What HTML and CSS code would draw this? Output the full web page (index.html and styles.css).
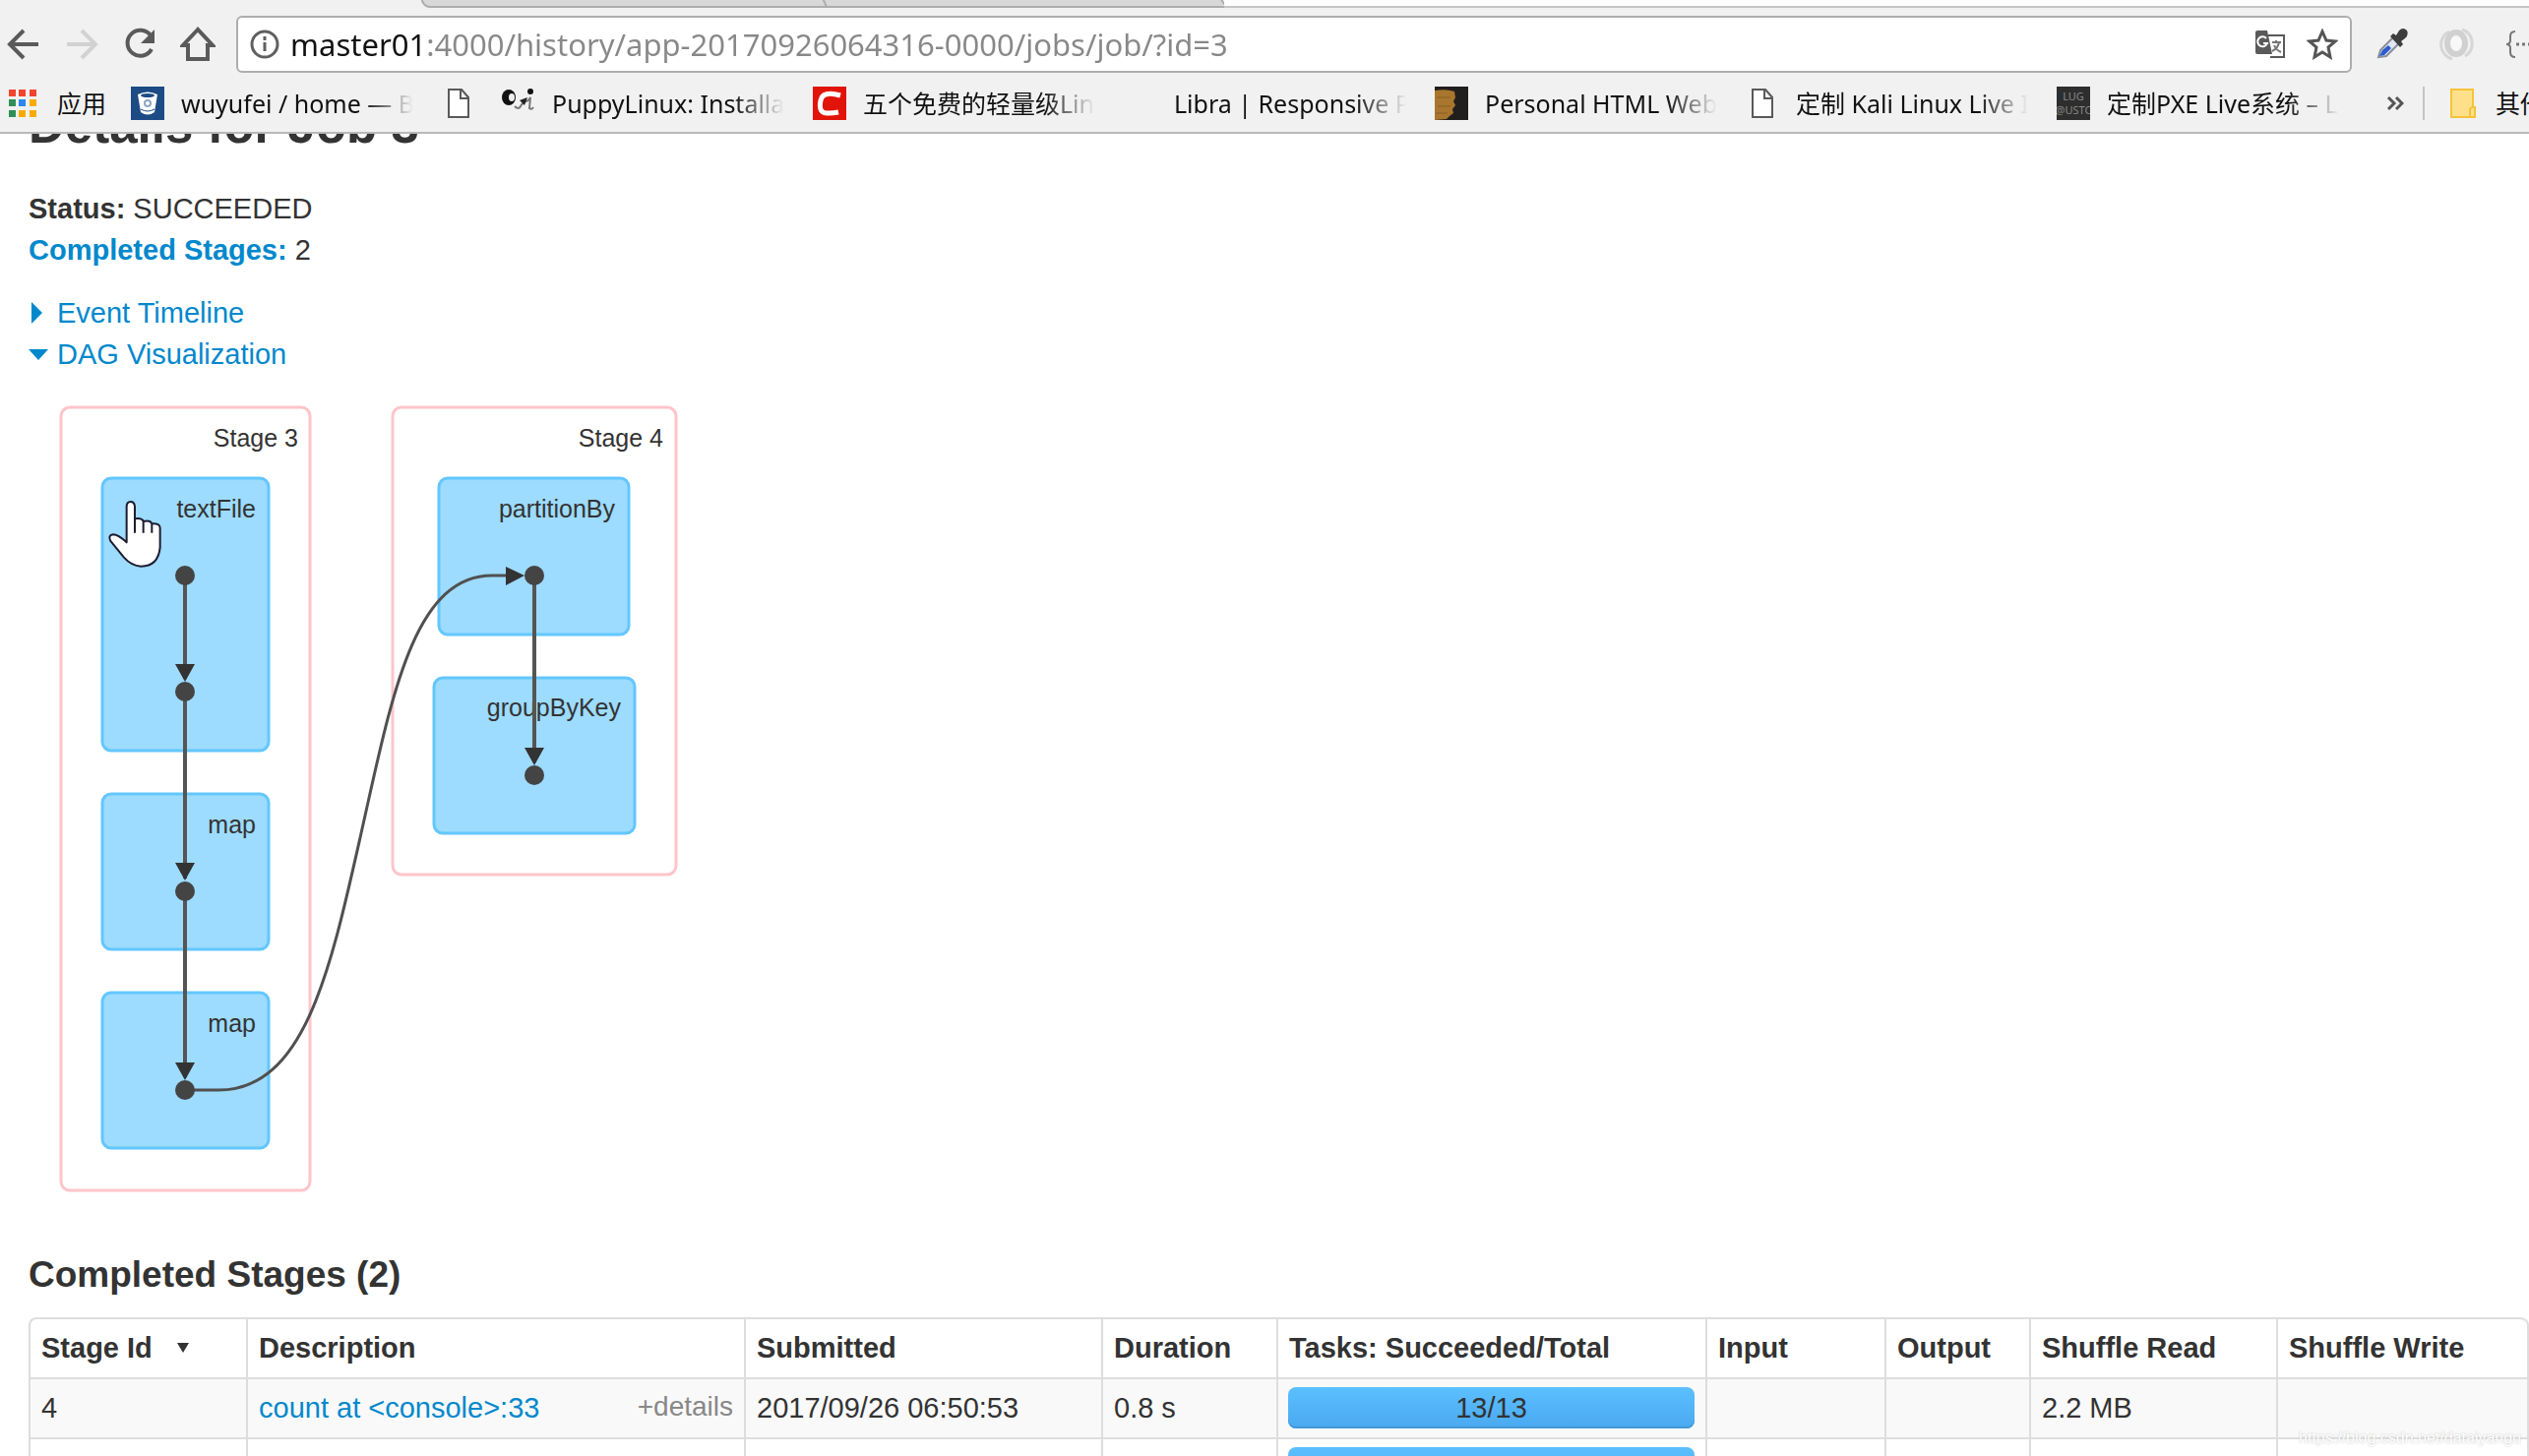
FILE: index.html
```html
<!DOCTYPE html>
<html lang="en">
<head>
<meta charset="utf-8">
<title>Details for Job 3</title>
<link rel="stylesheet" href="styles.css">
</head>
<body>
<header class="chrome">
  <div class="tabstrip">
    <div class="tab-active"></div>
    <svg class="tabs" viewBox="0 0 820 8" aria-hidden="true">
      <path d="M0 -2 Q2 6 8 7 H812 Q818 6 813 -2z" fill="#d8d8d8"/>
      <path d="M0 -2 Q2 6 8 7 H816 M408 -2 L412 7 M812 -2 L818 7" fill="none" stroke="#adadad" stroke-width="2"/>
    </svg>
    <div class="tab-rest"></div>
  </div>
  <div class="toolbar">
    <nav class="nav">
      <button class="tool" aria-label="Back"><svg width="34" height="34" viewBox="0 0 34 34"><path d="M32 17H4M17 3L3 17l14 14" fill="none" stroke="#5a5a5a" stroke-width="4"/></svg></button>
      <button class="tool" aria-label="Forward"><svg width="34" height="34" viewBox="0 0 34 34"><path d="M2 17h28M17 3l14 14-14 14" fill="none" stroke="#d2d2d2" stroke-width="4"/></svg></button>
      <button class="tool" aria-label="Reload"><svg width="34" height="34" viewBox="0 0 34 34"><path d="M28 8A13 13 0 1 0 29 22" fill="none" stroke="#5a5a5a" stroke-width="4"/><path d="M32 2v14H18z" fill="#5a5a5a"/></svg></button>
      <button class="tool" aria-label="Home"><svg width="36" height="36" viewBox="0 0 36 36"><path d="M18 3L3 19h5v14h20V19h5z" fill="none" stroke="#5a5a5a" stroke-width="4"/></svg></button>
    </nav>
    <div class="omnibox">
      <svg width="30" height="30" viewBox="0 0 30 30" aria-hidden="true"><circle cx="15" cy="15" r="13" fill="none" stroke="#5f5f5f" stroke-width="3"/><path d="M15 13v9M15 7v4" stroke="#5f5f5f" stroke-width="3"/></svg>
      <input class="url" type="text" aria-label="Address" value="master01:4000/history/app-20170926064316-0000/jobs/job/?id=3">
      <button class="inner" aria-label="Translate this page"><svg width="30" height="30" viewBox="0 0 30 30"><path d="M13 6h16v22H15" fill="#fff" stroke="#5a5a5a" stroke-width="2"/><path d="M2 1h10l5 24H2a2 2 0 0 1-2-2V3a2 2 0 0 1 2-2z" fill="#5a5a5a"/><path d="M11 9a5 5 0 1 0 1 5H8" fill="none" stroke="#fff" stroke-width="2"/><path d="M17 13h9M21 11v2M24 13q-1 6-7 9M19 16q2 5 7 7" fill="none" stroke="#777" stroke-width="2"/></svg></button>
      <button class="inner" aria-label="Bookmark this page"><svg width="32" height="32" viewBox="0 0 32 32"><path d="M16 3l4 9 9 1-7 6 2 10-8-5-8 5 2-10-7-6 9-1z" fill="none" stroke="#555" stroke-width="3"/></svg></button>
    </div>
    <div class="extensions">
      <button class="tool" aria-label="Colour picker"><svg width="34" height="34" viewBox="0 0 34 34"><path d="M4 30l2-7L20 9l6 6-14 14z" fill="#dfe6f5" stroke="#8a8f98" stroke-width="2"/><path d="M5 29l3-6 6-5 3 3-7 7z" fill="#2d5bd0"/><path d="M16 9l3-3 3 2 3-5q4-4 8 0 2 5-2 8l-4 3 2 3-3 3z" fill="#3d3d3d"/></svg></button>
      <button class="tool" aria-label="Extension"><svg width="36" height="36" viewBox="0 0 36 36"><path d="M14 33A15 15 0 0 1 11 5M24 3a15 15 0 0 1 3 27" fill="none" stroke="#d6d6d6" stroke-width="3"/><ellipse cx="18" cy="17" rx="9" ry="11" fill="#f8f8f8" stroke="#d0d0d0" stroke-width="6"/></svg></button>
      <button class="tool" aria-label="JSON viewer"><svg width="36" height="34" viewBox="0 0 36 34"><path d="M12 4q-5 0-5 5v4q0 4-4 4 4 0 4 4v4q0 5 5 5" fill="none" stroke="#777" stroke-width="2"/><path d="M13 17h3M19 17h3M25 17h3" stroke="#777" stroke-width="3"/></svg></button>
    </div>
  </div>
  <nav class="bookmarks">
    <a class="apps" href="#">
      <svg width="28" height="28" viewBox="0 0 28 28" aria-hidden="true"><path d="M0 0h7v7H0zM10 0h7v7h-7zM21 0h7v7h-7z" fill="#f4442e"/><path d="M0 10h7v7H0zM0 21h7v7H0z" fill="#2f8f56"/><path d="M10 10h7v7h-7z" fill="#2b87f0"/><path d="M21 10h7v7h-7zM10 21h7v7h-7zM21 21h7v7h-7z" fill="#fbab00"/></svg>
      <span>应用</span>
    </a>
    <a class="bookmark" href="#"><svg class="fav" viewBox="0 0 34 34" aria-hidden="true"><path d="M0 0h34v34H0z" fill="#1c4b85"/><path d="M7 8q10-5 20 0l-3 18q-7 5-14 0z" fill="#fff"/><ellipse cx="17" cy="9" rx="7" ry="2" fill="#1c4b85"/><circle cx="17" cy="17" r="4" fill="#8da6c3"/><circle cx="17" cy="17" r="2" fill="#fff"/><path d="M10 23q7 4 14 0" stroke="#1c4b85" stroke-width="1" fill="none"/></svg><span class="label">wuyufei / home — Bitbucket</span></a>
    <a class="bookmark bookmark-bare" href="#" aria-label="Untitled bookmark"><svg class="fav" viewBox="0 0 34 34" aria-hidden="true"><path d="M7 3h13l7 8v20H7zM19 3v9h8" fill="#fff" stroke="#5a5a5a" stroke-width="2"/></svg></a>
    <a class="bookmark" href="#"><svg class="fav" viewBox="0 0 34 34" aria-hidden="true"><ellipse cx="7" cy="11" rx="7" ry="8" fill="#111"/><ellipse cx="10" cy="11" rx="3" ry="4" fill="#eee"/><path d="M13 20q4 4 6 0t8-6l2-3-1 11q2 2 4-1" fill="none" stroke="#777" stroke-width="2"/><path d="M18 14l8-3-3 8z" fill="#222"/><circle cx="29" cy="5" r="3" fill="#111"/></svg><span class="label">PuppyLinux: Installation</span></a>
    <a class="bookmark" href="#"><svg class="fav" viewBox="0 0 34 34" aria-hidden="true"><path d="M0 0h34v34H0z" fill="#e1140a"/><path d="M28 9q-18-5-20 5-3 14 8 13 5 0 10-1" fill="none" stroke="#fff" stroke-width="5"/></svg><span class="label">五个免费的轻量级Linux</span></a>
    <a class="bookmark" href="#"><span class="fav"></span><span class="label">Libra | Responsive Portfolio</span></a>
    <a class="bookmark" href="#"><svg class="fav" viewBox="0 0 34 34" aria-hidden="true"><path d="M0 0h34v34H0z" fill="#211e1e"/><path d="M0 4q12-2 20 1l1 6-2 4 2 4-3 4 1 4-4 3-3 3-12 1z" fill="#a8762d"/><path d="M2 11h14M3 20h13M1 27h12" stroke="#8a5f22" stroke-width="1"/></svg><span class="label">Personal HTML Website</span></a>
    <a class="bookmark" href="#"><svg class="fav" viewBox="0 0 34 34" aria-hidden="true"><path d="M7 3h13l7 8v20H7zM19 3v9h8" fill="#fff" stroke="#5a5a5a" stroke-width="2"/></svg><span class="label">定制 Kali Linux Live ISO</span></a>
    <a class="bookmark" href="#"><svg class="fav fav-text" viewBox="0 0 34 34" aria-hidden="true"><path d="M0 0h34v34H0z" fill="#2e2e2e"/><text x="17" y="14">LUG</text><text x="17" y="28">@USTC</text></svg><span class="label">定制PXE Live系统 – LUG</span></a>
    <button class="more" aria-label="More bookmarks"><svg width="18" height="16" viewBox="0 0 18 16"><path d="M2 2l6 6-6 6M10 2l6 6-6 6" fill="none" stroke="#555" stroke-width="3"/></svg></button>
    <a class="others" href="#"><svg width="26" height="30" viewBox="0 0 26 30" aria-hidden="true"><path d="M1 1h22v18h2v10H1z" fill="#ffe08a" stroke="#f5c33b" stroke-width="2"/><path d="M20 28v-7q2-3 4-2" fill="none" stroke="#f5c33b" stroke-width="2"/></svg><span>其他书签</span></a>
  </nav>
</header>

<main class="viewport">
  <div class="page">
    <h1>Details for Job 3</h1>
    <ul class="summary">
      <li><strong>Status:</strong> SUCCEEDED</li>
      <li><a href="#completed"><strong>Completed Stages:</strong></a> 2</li>
    </ul>
    <a class="toggle" href="#timeline"><svg width="20" height="22" viewBox="0 0 20 22" aria-hidden="true"><path d="M3 0l11 11L3 22z"/></svg>Event Timeline</a>
    <a class="toggle" href="#dag"><svg width="20" height="22" viewBox="0 0 20 22" aria-hidden="true"><path d="M0 6h20L10 17z"/></svg>DAG Visualization</a>

    <svg class="dag" id="dag" width="700" height="870" viewBox="29 381 700 870" role="img" aria-label="DAG of stages 3 and 4">
      <g class="stage">
        <rect x="62" y="414" width="253" height="796" rx="9"/>
        <rect x="399" y="414" width="288" height="475" rx="9"/>
      </g>
      <g class="op">
        <rect x="104" y="486" width="169" height="277" rx="9"/>
        <rect x="104" y="807" width="169" height="158" rx="9"/>
        <rect x="104" y="1009" width="169" height="158" rx="9"/>
        <rect x="446" y="486" width="193" height="159" rx="9"/>
        <rect x="441" y="689" width="204" height="158" rx="9"/>
      </g>
      <g class="caption">
        <text x="303" y="454">Stage 3</text>
        <text x="260" y="526">textFile</text>
        <text x="260" y="847">map</text>
        <text x="260" y="1049">map</text>
        <text x="674" y="454">Stage 4</text>
        <text x="625" y="526">partitionBy</text>
        <text x="631" y="728">groupByKey</text>
      </g>
      <g class="edge">
        <path class="thick" d="M188 585V690M188 703V893M188 906V1095M543 585V775"/>
        <path d="M188 1108H222C310 1108 336 985 367 847C398 709 420 585 500 585H520"/>
      </g>
      <path class="arrow" d="M178 675h20l-10 18zM178 877h20l-10 18zM178 1080h20l-10 18zM533 760h20l-10 18zM514 576v19l19-10z"/>
      <g class="dot">
        <circle cx="188" cy="585" r="10"/>
        <circle cx="188" cy="703" r="10"/>
        <circle cx="188" cy="906" r="10"/>
        <circle cx="188" cy="1108" r="10"/>
        <circle cx="543" cy="585" r="10"/>
        <circle cx="543" cy="788" r="10"/>
      </g>
      <path class="pointer" transform="translate(40 390) scale(.3333)" d="M266 484V375Q266 360 278 360T291 375V412Q312 408 318 420Q338 415 343 427Q368 425 368 440V500Q362 557 310 557Q280 555 258 530L217 480Q208 462 225 460Q240 460 266 484zM291 412V455M317 420V455M343 427V455"/>
    </svg>

    <h2 id="completed">Completed Stages (2)</h2>
    <table class="stages">
      <colgroup><col class="c-id"><col class="c-desc"><col class="c-sub"><col class="c-dur"><col class="c-tasks"><col class="c-in"><col class="c-out"><col class="c-read"><col></colgroup>
      <thead>
        <tr><th>Stage Id<svg class="sort" width="12" height="10" viewBox="0 0 12 10" aria-hidden="true"><path d="M0 0h12L6 10z"/></svg></th><th>Description</th><th>Submitted</th><th>Duration</th><th>Tasks: Succeeded/Total</th><th>Input</th><th>Output</th><th>Shuffle Read</th><th>Shuffle Write</th></tr>
      </thead>
      <tbody>
        <tr><td>4</td><td><div class="desc"><a href="#">count at &lt;console&gt;:33</a><span class="details">+details</span></div></td><td>2017/09/26 06:50:53</td><td>0.8 s</td><td class="bar-cell"><div class="bar">13/13</div></td><td></td><td></td><td>2.2 MB</td><td></td></tr>
        <tr><td>3</td><td><div class="desc"><a href="#">map at &lt;console&gt;:29</a><span class="details">+details</span></div></td><td>2017/09/26 06:50:52</td><td>0.9 s</td><td class="bar-cell"><div class="bar">13/13</div></td><td></td><td></td><td></td><td>2.2 MB</td></tr>
      </tbody>
    </table>
  </div>
</main>
<div class="watermark">https://blog.csdn.net/dataiyangu</div>
</body>
</html>
```
FILE: styles.css
```css
* { box-sizing: border-box; }

body {
  margin: 0;
  height: 100vh;
  display: flex;
  flex-direction: column;
  overflow: hidden;
  position: relative;
  background: #fff;
  color: #333;
  font: 29px/42px "Liberation Sans", Arial, sans-serif;
}

a { color: #0088cc; text-decoration: none; }

button {
  border: 0;
  padding: 0;
  background: none;
  display: flex;
  align-items: center;
  justify-content: center;
}

svg { flex: none; }

/* Browser chrome */
.chrome {
  flex: none;
  background: #f1f1f1;
  border-bottom: 2px solid #b9b9b9;
  font: 25px/36px "Noto Sans", "Noto Sans CJK SC", sans-serif;
}

.tabstrip { display: flex; height: 8px; }
.tab-active { width: 428px; }
.tabs { width: 820px; height: 8px; margin-right: -4px; }
.tab-rest { flex: 1; background: #fdfdfd; border-bottom: 2px solid #c4c4c4; }

.toolbar { display: flex; align-items: center; padding: 8px 0; }
.nav { display: flex; gap: 11px; margin-right: 15px; }
.tool { width: 48px; height: 48px; flex: none; }

.omnibox {
  flex: 1;
  display: flex;
  align-items: center;
  height: 58px;
  padding: 0 12px;
  background: #fff;
  border: 2px solid #adadad;
  border-radius: 6px;
}

.url {
  flex: 1;
  min-width: 0;
  margin-left: 11px;
  padding: 0;
  border: 0;
  outline: 0;
  font: 31px/42px "Noto Sans", sans-serif;
  color: #888;
  -webkit-text-fill-color: transparent;
  background: linear-gradient(90deg, #111 134px, #888 134px);
  -webkit-background-clip: text;
  background-clip: text;
}

.inner { width: 32px; height: 32px; margin-left: 21px; }

.extensions {
  display: flex;
  gap: 18px;
  width: 180px;
  padding-left: 16px;
  overflow: hidden;
}

.bookmarks {
  display: flex;
  align-items: center;
  height: 52px;
  padding: 0 0 6px 9px;
  overflow: hidden;
  white-space: nowrap;
}
.bookmarks a { color: #111; display: flex; align-items: center; flex: none; }
.apps { width: 124px; gap: 21px; }
.bookmark { width: 316px; gap: 17px; }
.bookmark-bare { width: 61px; }
.fav { width: 34px; height: 34px; flex: none; }
.fav-text text { font-size: 11px; fill: #888; text-anchor: middle; }
.label {
  width: 238px;
  overflow: hidden;
  -webkit-mask-image: linear-gradient(90deg, #000 185px, transparent 236px);
  mask-image: linear-gradient(90deg, #000 185px, transparent 236px);
}
.more { width: 58px; height: 34px; flex: none; border-right: 2px solid #c4c4c4; }
.others { gap: 20px; padding-left: 26px; }

/* Page, scrolled past the top of its heading */
.viewport { flex: 1; min-height: 0; overflow: hidden; }
.page { margin-top: -50px; padding-left: 29px; }

h1 { margin: 0 0 21px; font-size: 51px; line-height: 84px; }
h2 { margin: 0 0 22px; font-size: 37px; line-height: 42px; }

.summary { list-style: none; margin: 0 0 22px; padding: 0; }
.toggle { display: flex; align-items: center; gap: 9px; width: max-content; }
.toggle path { fill: #0088cc; }

.dag { display: block; margin-bottom: 24px; }
.stage rect { fill: #fff; stroke: #ffc4ca; stroke-width: 3; }
.op rect { fill: #9ddbff; stroke: #63c7ff; stroke-width: 3; }
.caption text { font-size: 25px; fill: #333; text-anchor: end; }
.edge path { fill: none; stroke: #505050; stroke-width: 3; }
.edge .thick { stroke: #555; stroke-width: 4; }
.arrow { fill: #333; }
.dot circle { fill: #444; }
.pointer { fill: #fff; stroke: #1c1c30; stroke-width: 6; stroke-linejoin: round; }

.stages {
  width: 100%;
  table-layout: fixed;
  border-collapse: separate;
  border-spacing: 0;
  border: 2px solid #ddd;
  border-width: 0 2px 0 0;
  border-radius: 8px;
}
.c-id { width: 221px; }
.c-desc { width: 506px; }
.c-sub { width: 363px; }
.c-dur { width: 178px; }
.c-tasks { width: 436px; }
.c-in { width: 182px; }
.c-out { width: 147px; }
.c-read { width: 251px; }

th, td {
  height: 61px;
  padding: 8px 11px 9px;
  border-top: 2px solid #ddd;
  border-left: 2px solid #ddd;
  text-align: left;
  white-space: nowrap;
}
th:first-child { border-top-left-radius: 8px; }
th:last-child { border-top-right-radius: 8px; }
tbody tr:nth-child(odd) td { background: #f9f9f9; }
.sort { margin-left: 25px; vertical-align: 5px; fill: #333; }

.desc { display: flex; justify-content: space-between; }
.details { font-size: 28px; line-height: 40px; color: #888; }

.bar-cell { padding: 8px 11px 9px 10px; }
.bar {
  height: 42px;
  text-align: center;
  border-radius: 8px;
  background: linear-gradient(#5bc0ff, #4aa8f0);
  box-shadow: inset 0 -2px 0 #4398d8;
}

.watermark {
  position: absolute;
  right: 8px;
  bottom: 4px;
  font-size: 16px;
  line-height: 28px;
  color: #fff;
  text-shadow: 0 0 2px #bbb;
}
```
